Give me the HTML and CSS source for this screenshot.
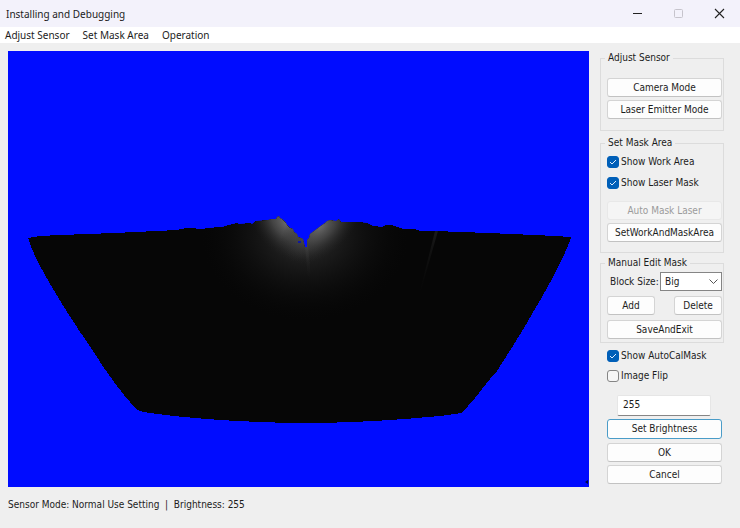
FILE: index.html
```html
<!DOCTYPE html>
<html lang="en">
<head>
<meta charset="utf-8">
<title>Installing and Debugging</title>
<link rel="stylesheet" href="styles.css">
</head>
<body>
<header class="titlebar">
  <h1 class="title">Installing and Debugging</h1>
  <div class="window-controls">
    <button class="window-button" type="button" aria-label="Minimize"><svg width="11" height="11" viewBox="0 0 11 11"><path d="M1 5.5h9" stroke="#222"/></svg></button>
    <button class="window-button" type="button" aria-label="Maximize" disabled><svg width="11" height="11" viewBox="0 0 11 11"><rect x="1.5" y="1.5" width="8" height="8" rx="1" fill="none" stroke="#c6c4cc"/></svg></button>
    <button class="window-button" type="button" aria-label="Close"><svg width="11" height="11" viewBox="0 0 11 11"><path d="M1 1l9 9M10 1l-9 9" stroke="#222" stroke-width="1.1"/></svg></button>
  </div>
</header>
<nav class="menubar">
  <button class="menu" type="button">Adjust Sensor</button>
  <button class="menu" type="button">Set Mask Area</button>
  <button class="menu" type="button">Operation</button>
</nav>
<main class="content">
  <svg class="view" viewBox="8 51 581 436" role="img" aria-label="Sensor image">
    <defs>
      <radialGradient id="glowLeft" gradientUnits="userSpaceOnUse" cx="0" cy="0" r="1" gradientTransform="translate(287 223) rotate(46) scale(48 30)">
        <stop offset="0" stop-color="#6c6c6c"/><stop offset=".4" stop-color="#505050" stop-opacity=".75"/><stop offset="1" stop-color="#202020" stop-opacity="0"/>
      </radialGradient>
      <radialGradient id="glowRight" gradientUnits="userSpaceOnUse" cx="0" cy="0" r="1" gradientTransform="translate(320 227) rotate(-40) scale(46 28)">
        <stop offset="0" stop-color="#6a6a6a"/><stop offset=".4" stop-color="#4c4c4c" stop-opacity=".75"/><stop offset="1" stop-color="#202020" stop-opacity="0"/>
      </radialGradient>
      <radialGradient id="haze" gradientUnits="userSpaceOnUse" cx="0" cy="0" r="1" gradientTransform="translate(305 235) scale(104 86)">
        <stop offset="0" stop-color="#303030"/><stop offset=".45" stop-color="#181818" stop-opacity=".8"/><stop offset="1" stop-color="#080808" stop-opacity="0"/>
      </radialGradient>
      <linearGradient id="streak" x1="0" y1="0" x2="0" y2="1">
        <stop offset="0" stop-color="#484848"/><stop offset="1" stop-color="#181818" stop-opacity="0"/>
      </linearGradient>
      <path id="area" d="M28 238L40 236 60 235 88 234 114 233 136 232 156 231 177 230 180 229 188 228 203 229 206 228 222 227 229 225 237 223 239 224 250 223 252 224 256 221 268 220 271 219 276 219 277 217 279 216 280 218 282 219 284 221 286 223 287 225 290 228 293 229 294 232 297 234 298 237 301 238 303 239 304 243 305 247 307 247 307 240 309 238 310 234 314 231 318 228 322 225 325 223 327 221 330 220 336 221 339 219 341 222 359 222 367 223 373 226 382 227 386 225 391 225 397 227 404 229 414 229 420 231 434 231 461 232 488 233 511 234 534 235 555 236 571 237 570 241 563 257 553 277 542 297 532 314 524 328 511 349 497 371 494 374 486 384 475 398 462 413 440 416 405 419Q350 423 306 423 270 423 220 420 177 417 143 412L136 409Q115 386 93 351 64 309 45 275 34 256 28 238Z"/>
      <clipPath id="areaClip"><use href="#area"/></clipPath>
    </defs>
    <rect x="8" y="51" width="581" height="436" fill="#000cff"/>
    <use href="#area" fill="#060606" shape-rendering="crispEdges"/>
    <g clip-path="url(#areaClip)">
      <rect x="200" y="210" width="210" height="120" fill="url(#haze)"/>
      <rect x="230" y="210" width="100" height="80" fill="url(#glowLeft)"/>
      <rect x="280" y="210" width="100" height="80" fill="url(#glowRight)"/>
      <path d="M305 245h3l3 35h-3z" fill="url(#streak)" opacity=".5"/>
      <path d="M435 231h3l-16 56-4 12z" fill="url(#streak)" opacity=".3"/>
    </g>
    <rect x="298" y="241" width="3" height="2" fill="#1018a0"/>
    <path d="M585 482l3-2v4z" fill="#000840"/>
  </svg>
  <aside class="side">
    <fieldset class="group group-sensor">
      <legend>Adjust Sensor</legend>
      <button class="button" type="button">Camera Mode</button>
      <button class="button" type="button">Laser Emitter Mode</button>
    </fieldset>
    <fieldset class="group group-mask">
      <legend>Set Mask Area</legend>
      <div class="checks">
        <label class="check"><input type="checkbox" checked>Show Work Area</label>
        <label class="check"><input type="checkbox" checked>Show Laser Mask</label>
      </div>
      <button class="button" type="button" disabled>Auto Mask Laser</button>
      <button class="button" type="button">SetWorkAndMaskArea</button>
    </fieldset>
    <fieldset class="group group-edit">
      <legend>Manual Edit Mask</legend>
      <div class="row">
        <label for="block-size">Block Size:</label>
        <div class="select-wrap">
          <select id="block-size"><option>Big</option></select>
          <svg class="chevron" width="9" height="5" viewBox="0 0 9 5"><path d="M.5.5l4 4 4-4" fill="none" stroke="#555"/></svg>
        </div>
      </div>
      <div class="row">
        <button class="button small" type="button">Add</button>
        <button class="button small" type="button">Delete</button>
      </div>
      <button class="button" type="button">SaveAndExit</button>
    </fieldset>
    <div class="actions">
      <div class="checks">
        <label class="check"><input type="checkbox" checked>Show AutoCalMask</label>
        <label class="check"><input type="checkbox">Image Flip</label>
      </div>
      <input class="brightness" type="text" value="255" aria-label="Brightness">
      <button class="button primary" type="button">Set Brightness</button>
      <div class="confirm">
        <button class="button" type="button">OK</button>
        <button class="button" type="button">Cancel</button>
      </div>
    </div>
  </aside>
</main>
<footer class="status">Sensor Mode: Normal Use Setting&nbsp; |&nbsp; Brightness: 255</footer>
</body>
</html>
```
FILE: styles.css
```css
* { box-sizing: border-box; }

body {
  margin: 0;
  min-height: 100vh;
  background: #efefef;
  color: #1c1c1c;
  font: 10px/14px "DejaVu Sans Condensed", "DejaVu Sans", sans-serif;
}

button, input, select { font: inherit; color: inherit; }

.titlebar {
  display: flex;
  align-items: center;
  justify-content: space-between;
  height: 27px;
  padding-left: 6px;
  background: #f3f2fb;
}

.title {
  margin: 0;
  font: 10px/14px "Noto Sans", sans-serif;
}

.window-controls { display: flex; }

.window-button {
  display: flex;
  align-items: center;
  justify-content: center;
  width: 41px;
  height: 25px;
  padding: 0;
  border: 0;
  background: none;
}

.menubar {
  display: flex;
  gap: 13px;
  height: 16px;
  padding-left: 5px;
  background: #fff;
}

.menu {
  padding: 0;
  border: 0;
  background: none;
  font: 10px/14px "Noto Sans", sans-serif;
}

.content {
  display: flex;
  align-items: flex-start;
  gap: 11px;
  padding: 8px 16px 0 8px;
}

.view {
  flex: 1;
  min-width: 0;
}

.side { width: 124px; }

.group {
  display: flex;
  flex-direction: column;
  min-width: 0;
  margin: 0;
  border: 1px solid #dcdcdc;
}

.group legend {
  margin-left: -2px;
  padding: 0 3px;
}

.group-sensor {
  gap: 3px;
  padding: 13px 1px 11px 6px;
}

.group-mask {
  gap: 3px;
  margin-top: 5px;
  padding: 5px 1px 10px 6px;
}

.group-mask .checks { margin-bottom: 8px; }

.group-edit {
  gap: 5px;
  margin-top: 3px;
  padding: 2px 1px 3px 6px;
}

.checks {
  display: flex;
  flex-direction: column;
  gap: 7px;
}

.check {
  display: flex;
  align-items: center;
  gap: 2px;
  white-space: nowrap;
}

.check input {
  appearance: none;
  flex: none;
  width: 12px;
  height: 12px;
  margin: 0;
  border: 1px solid #858585;
  border-radius: 3px;
  background: #f6f6f6;
}

.check input:checked {
  border-color: #005fb8;
  background: #005fb8 url("data:image/svg+xml,%3Csvg xmlns='http://www.w3.org/2000/svg' viewBox='0 0 10 10'%3E%3Cpath d='M2 5l2 2 4-4' fill='none' stroke='%23dcecff'/%3E%3C/svg%3E") center / 10px no-repeat;
}

.button {
  height: 19px;
  padding: 0;
  border: 1px solid #d4d4d4;
  border-bottom-color: #c2c2c2;
  border-radius: 3px;
  background: #fdfdfd;
  white-space: nowrap;
}

.button:disabled {
  border-color: #e8e8e8;
  background: #f5f5f5;
  color: #9b9b9b;
}

.row {
  display: flex;
  align-items: center;
  justify-content: space-between;
}

.row label {
  padding-left: 3px;
  white-space: nowrap;
}

.small { width: 48px; }

.select-wrap {
  position: relative;
  width: 62px;
}

.select-wrap select {
  display: block;
  appearance: none;
  width: 100%;
  height: 19px;
  padding: 0 4px;
  border: 1px solid #858585;
  border-radius: 0;
  background: #fff;
}

.chevron {
  position: absolute;
  top: 7px;
  right: 4px;
  pointer-events: none;
}

.actions {
  display: flex;
  flex-direction: column;
  padding: 6px 2px 0 7px;
}

.actions .checks { gap: 6px; }

.brightness {
  width: 94px;
  height: 21px;
  margin: 12px 0 3px 10px;
  padding: 0 5px 2px;
  border: 1px solid #e6e6e6;
  border-bottom-color: #868686;
  border-radius: 2px;
  background: #fff;
}

.button.primary {
  height: 20px;
  border-color: #4a9cc8;
}

.confirm {
  display: flex;
  flex-direction: column;
  gap: 3px;
  margin-top: 4px;
}

.status { padding: 11px 8px; }
```
